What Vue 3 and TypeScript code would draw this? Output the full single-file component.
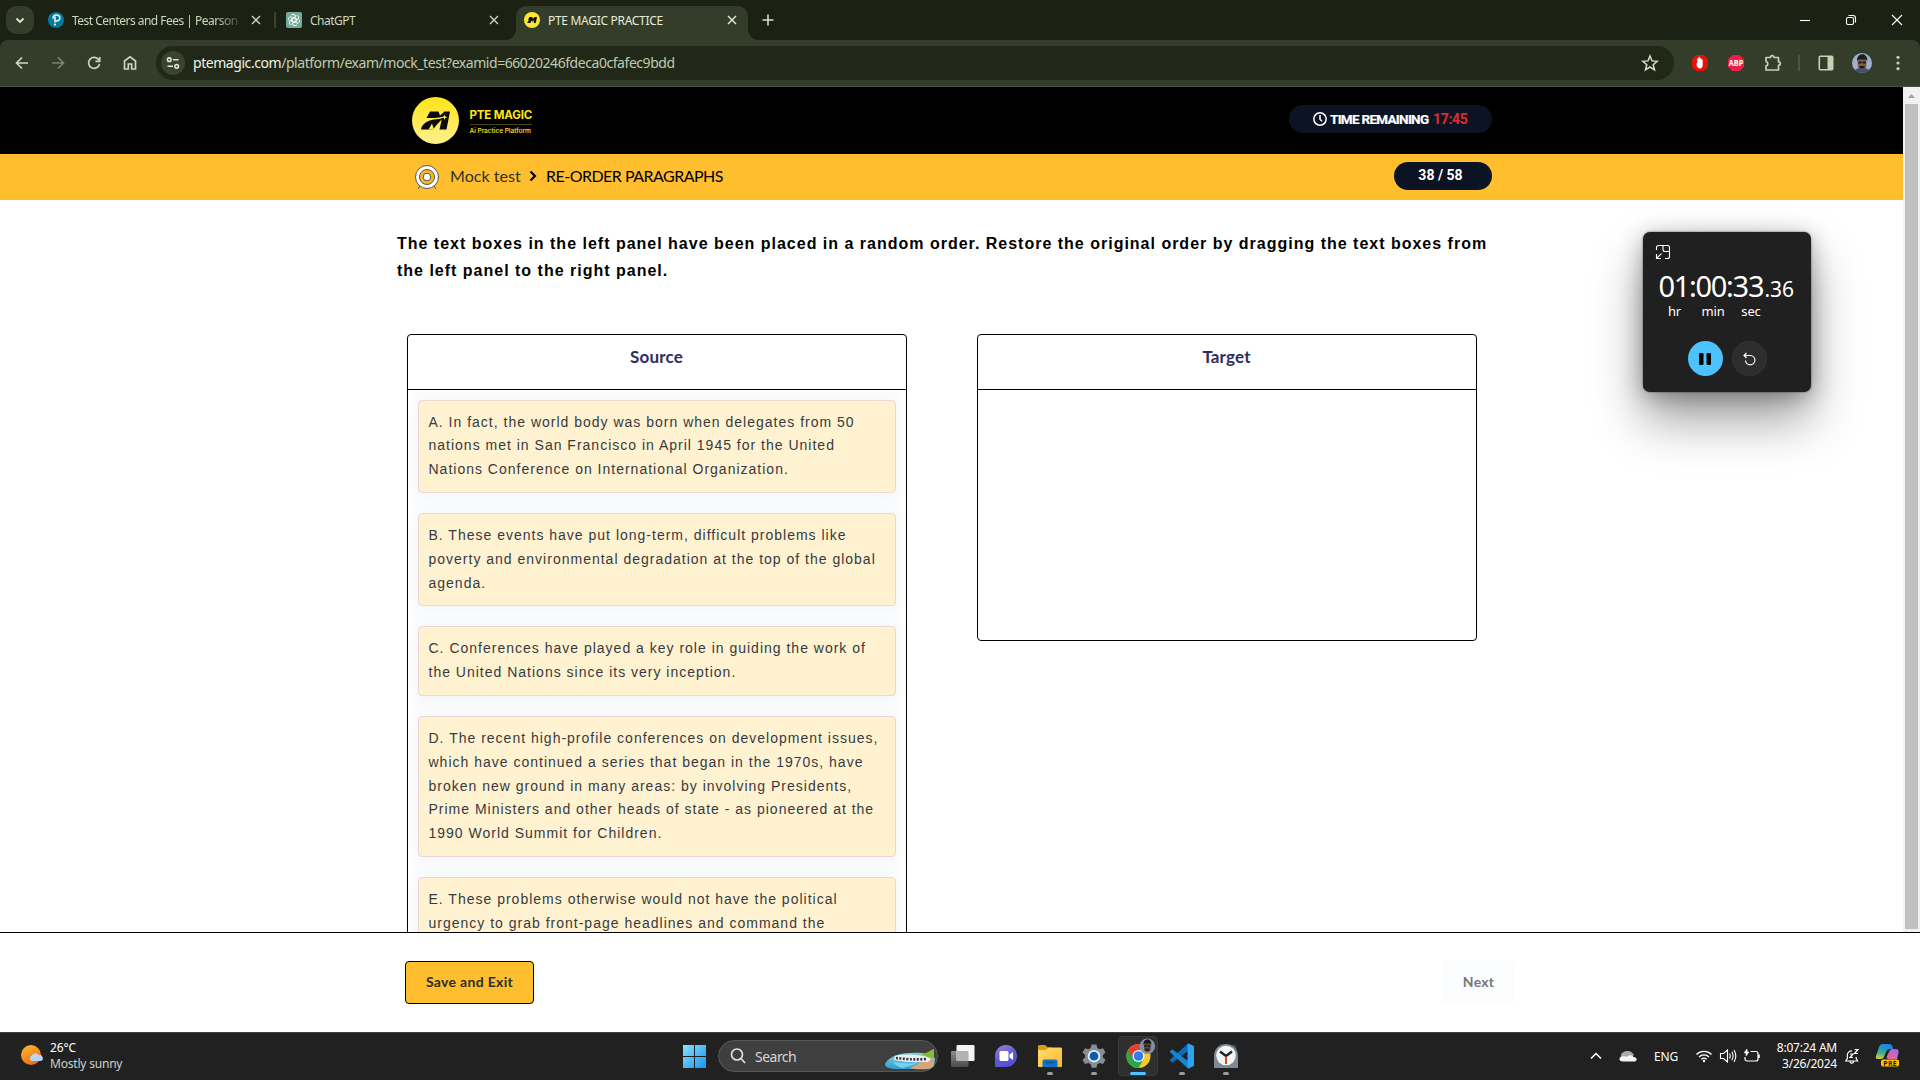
<script setup lang="ts">
interface Item { id: string; text: string }

const items: Item[] = [
  { id: 'A', text: 'In fact, the world body was born when delegates from 50 nations met in San Francisco in April 1945 for the United Nations Conference on International Organization.' },
  { id: 'B', text: 'These events have put long-term, difficult problems like poverty and environmental degradation at the top of the global agenda.' },
  { id: 'C', text: 'Conferences have played a key role in guiding the work of the United Nations since its very inception.' },
  { id: 'D', text: 'The recent high-profile conferences on development issues, which have continued a series that began in the 1970s, have broken new ground in many areas: by involving Presidents, Prime Ministers and other heads of state - as pioneered at the 1990 World Summit for Children.' },
  { id: 'E', text: 'These problems otherwise would not have the political urgency to grab front-page headlines and command the' },
]
</script>

<template>
  <div class="screen">
    <!-- Tab strip -->
    <div class="tabs">
      <div class="tab-search">
        <svg width="28" height="28" viewBox="0 0 28 28"><path d="M10.500 12.500l3.500 3.500 3.500-3.500" fill="none" stroke="#dfe8d2" stroke-width="1.800" /></svg>
      </div>
      <div class="tab t1">
        <svg class="fav" width="16" height="16" viewBox="0 0 16 16"><circle cx="8" cy="8" r="8" fill="#047a9c" /><path d="M5.200 6.600C4.600 4.400 6.400 3 8.400 3c2 0 3.400 1.200 3.400 3S10.400 9.200 8 9M7 4.500V10.500" fill="none" stroke="#fff" stroke-width="1.500" /><circle cx="7" cy="12.500" r="1.100" fill="#fff" /></svg>
        <span class="title fade">Test Centers and Fees | Pearson</span>
        <svg class="x" width="16" height="16" viewBox="0 0 16 16"><path d="M4 4l8 8M12 4l-8 8" /></svg>
      </div>
      <i class="tab-div"></i>
      <div class="tab t2">
        <svg class="fav" width="16" height="16" viewBox="0 0 16 16"><rect width="16" height="16" rx="2" fill="#74aa9c" /><g fill="none" stroke="#fff" stroke-width="0.9"><path v-for="n in 6" :key="n" d="M8 5.600L10.100 6.800V10.900a2.300 2.300 0 0 0 3.300-2.900" :transform="`rotate(${n * 60} 8 8)`" /></g></svg>
        <span class="title gpt">ChatGPT</span>
        <svg class="x" width="16" height="16" viewBox="0 0 16 16"><path d="M4 4l8 8M12 4l-8 8" /></svg>
      </div>
      <div class="tab t3">
        <svg class="fav" width="16" height="16" viewBox="0 0 16 16"><circle cx="8" cy="8" r="8" fill="#ffe833" /><path d="M5.500 5h3l.3 2L10.500 5H13l-1.200 6H9.600l.6-3-1.600 1.800-.8-1.500L6.400 11H3l2-3H4z" fill="#111" /></svg>
        <span class="title pte">PTE MAGIC PRACTICE</span>
        <svg class="x" width="16" height="16" viewBox="0 0 16 16"><path d="M4 4l8 8M12 4l-8 8" /></svg>
      </div>
      <svg class="plus" width="16" height="16" viewBox="0 0 16 16"><path d="M8 2.500v11M2.500 8h11" stroke="#d3dfc4" stroke-width="1.600" /></svg>
      <div class="win">
        <svg width="46" height="40" viewBox="0 0 46 40"><path d="M18 20.500h10" /></svg>
        <svg width="46" height="40" viewBox="0 0 46 40"><rect x="18.500" y="17.500" width="7" height="7" rx="1.500" /><path d="M20.500 15.500H25a2.500 2.500 0 0 1 2.500 2.500v4.500" /></svg>
        <svg width="46" height="40" viewBox="0 0 46 40"><path d="M18 15l10 10M28 15L18 25" /></svg>
      </div>
    </div>

    <!-- Toolbar -->
    <div class="toolbar">
      <div class="nav">
        <svg width="36" height="46" viewBox="0 0 36 46"><path d="M24 23H13M18 17.500L12.500 23l5.500 5.500" /></svg>
        <svg class="dim" width="36" height="46" viewBox="0 0 36 46"><path d="M12 23h11M18 17.500l5.500 5.500-5.500 5.500" /></svg>
        <svg width="36" height="46" viewBox="0 0 36 46"><path d="M22.800 20A5.500 5.500 0 1 0 23.500 24M23.700 17v4.300h-4.300" /></svg>
        <svg width="36" height="46" viewBox="0 0 36 46"><path d="M12.500 29V21L18 16.800 23.500 21v8h-3.800v-5h-3.400v5z" /></svg>
      </div>
      <div class="omnibox">
        <div class="tune">
          <svg width="24" height="24" viewBox="0 0 24 24" fill="none" stroke="#dfe8d2" stroke-width="1.600"><circle cx="8.300" cy="8.700" r="1.800" /><path d="M12 8.700h5.500M6.500 15.300H12" /><circle cx="15.700" cy="15.300" r="1.800" /></svg>
        </div>
        <span class="url"><b>ptemagic.com</b>/platform/exam/mock_test?examid=66020246fdeca0cfafec9bdd</span>
        <svg class="star" width="18" height="18" viewBox="0 0 18 18"><path d="M9 2l2 4.900 5.200.4-4 3.400 1.300 5.100L9 13l-4.500 2.800 1.300-5.100-4-3.400L7 6.900z" fill="none" stroke="#d3dfc4" stroke-width="1.500" /></svg>
      </div>
      <div class="exts">
        <svg class="e1" width="18" height="18" viewBox="0 0 18 18"><path d="M5.300 1h7.400L17 5.300v7.400L12.700 17H5.300L1 12.700V5.300z" fill="#e6100c" /><path d="M5.200 9l1 .8V4.800c0-.9 1.300-.9 1.300 0V3.600c0-1 1.400-1 1.400 0v1c0-.9 1.400-.9 1.400 0v1.200c0-.8 1.400-.8 1.400 0v5.400c0 1.800-1 3.200-3 3.200S6 13 5.200 9z" fill="#fff" /></svg>
        <svg class="e2" width="18" height="18" viewBox="0 0 18 18"><path d="M5.300 1h7.400L17 5.300v7.400L12.700 17H5.300L1 12.700V5.300z" fill="#ed1e45" /><text x="9" y="12" text-anchor="middle" textLength="14.500" lengthAdjust="spacingAndGlyphs" font-size="8.200" font-weight="700" fill="#fff" font-family="Open Sans, sans-serif">ABP</text></svg>
        <svg class="e3" width="20" height="20" viewBox="0 0 20 20"><path d="M3 4.500h4.500a1.800 1.800 0 0 1 3.600 0H15.500V8.800a1.800 1.800 0 0 1 0 3.600V17H3v-4a2.300 2.300 0 0 0 0-4.500z" fill="none" stroke="#c3d2b2" stroke-width="1.700" stroke-linejoin="round" /></svg>
        <i class="sep"></i>
        <svg class="e4" width="16" height="16" viewBox="0 0 16 16"><rect x="1.300" y="1.300" width="13.400" height="13.400" rx="1" fill="none" stroke="#c3d2b2" stroke-width="1.600" /><path d="M9.500 1h5v14h-5z" fill="#c3d2b2" /></svg>
        <svg class="e5" width="20" height="20" viewBox="0 0 20 20"><defs><clipPath id="av"><circle cx="10" cy="10" r="10" /></clipPath></defs><g clip-path="url(#av)"><rect width="20" height="20" fill="#9db0cc" /><path d="M1 20c1-4 5-5 9-5s8 1 9 5z" fill="#3b5273" /><rect x="5.800" y="4" width="8.600" height="12.500" rx="4" fill="#7d5d48" /><path d="M5 8c-.5-9 11-9 10.300 0l-1.300-1.600H6.600z" fill="#1d1c20" /><path d="M6.200 8.500h3.300v2H6.200zM10.600 8.500h3.300v2h-3.300zM7.500 13h5v2.500h-5z" fill="#211b1b" /></g></svg>
        <svg class="e6" width="6" height="18" viewBox="0 0 6 18" fill="#c3d2b2"><circle cx="3" cy="3.300" r="1.600" /><circle cx="3" cy="9" r="1.600" /><circle cx="3" cy="14.700" r="1.600" /></svg>
      </div>
    </div>

    <!-- Web page -->
    <div class="viewport">
      <div class="page">
        <header class="brand-bar">
          <svg class="logo" width="48" height="48" viewBox="0 0 48 48">
            <defs><linearGradient id="lg" x1="0" y1="0" x2="0" y2="1"><stop offset="0" stop-color="#ffe414" /><stop offset="1" stop-color="#fff192" /></linearGradient></defs>
            <circle cx="24.500" cy="23.500" r="23.500" fill="url(#lg)" />
            <path d="M19 14.500h8.500l1.500 4 4.500-4H39l-3.500 18h-7l2.200-10-5.200 5.500-3.500 4.500h-12c.5-5 6-9 13-10l6.500-.8 6.500-2.700-8 1.500c-6 .8-10.500.3-12.500.5z" fill="#0b0b0b" />
            <path d="M33.500 17.500l.7 2 2 .7-2 .7-.7 2-.7-2-2-.7 2-.7z" fill="#ffe93d" />
            <path d="M17.500 32.500l3.500-6 2 6z" fill="#ffed60" />
          </svg>
          <div class="brand">
            <strong>PTE MAGIC</strong>
            <span>Ai Practice Platform</span>
          </div>
          <div class="pill time">
            <svg width="16" height="16" viewBox="0 0 16 16" fill="none" stroke="#fff" stroke-width="1.500"><circle cx="8" cy="8" r="6.200" /><path d="M8 4v4.200l2 2" /></svg>
            <span class="tr">TIME REMAINING</span><span class="left">17:45</span>
          </div>
        </header>
        <div class="crumbs">
          <svg class="target-ico" width="26" height="26" viewBox="0 0 26 26"><path d="M6 22l-2 3M20 22l2 3" stroke="#555" /><circle cx="13" cy="13" r="11.500" fill="#fff" stroke="#57534d" /><circle cx="13" cy="13" r="7.500" fill="#f5b921" stroke="#57534d" /><circle cx="13" cy="13" r="3.800" fill="#fff" stroke="#57534d" /></svg>
          <span class="mock">Mock test</span>
          <svg class="chev" width="8" height="12" viewBox="0 0 8 12"><path d="M1.500 1.500L6 6l-4.500 4.500" fill="none" stroke="#000" stroke-width="2.200" /></svg>
          <span class="crumb">RE-ORDER PARAGRAPHS</span>
          <div class="pill count"><span>38 / 58</span></div>
        </div>
        <main>
          <p class="intro">The text boxes in the left panel have been placed in a random order. Restore the original order by dragging the text boxes from<br>the left panel to the right panel.</p>
          <div class="panels">
            <section class="panel source">
              <h2><span>Source</span></h2>
              <div class="list">
                <div v-for="i in items" :key="i.id" class="card">{{ i.id }}. {{ i.text }}</div>
              </div>
            </section>
            <section class="panel dest"><h2><span>Target</span></h2></section>
          </div>
        </main>
      </div>
      <div class="scroll">
        <svg width="17" height="17" viewBox="0 0 17 17"><path d="M5 11l3.500-4 3.500 4z" fill="#a3a3a3" /></svg>
        <div class="thumb"></div>
      </div>
    </div>
    <footer>
      <button class="save"><span>Save and Exit</span></button>
      <button class="next" disabled><span>Next</span></button>
    </footer>

    <!-- Taskbar -->
    <div class="taskbar">
      <div class="weather">
        <svg width="24" height="24" viewBox="0 0 24 24"><defs><linearGradient id="sun" x1="0" y1="0" x2="0.500" y2="1"><stop offset="0" stop-color="#fbbb2c" /><stop offset="1" stop-color="#f0701a" /></linearGradient></defs><circle cx="11" cy="11" r="10" fill="url(#sun)" /><path d="M11.500 17a3 3 0 0 1 .3-5.500 4 4 0 0 1 7-.2 3 3 0 0 1 2 5.700z" fill="#bcd2f7" /></svg>
        <div class="wtext"><span class="deg">26°C</span><span class="mostly">Mostly sunny</span></div>
      </div>
      <div class="apps">
        <svg class="winlogo" width="24" height="24" viewBox="0 0 24 24"><defs><linearGradient id="wl" x1="0" y1="0" x2="1" y2="1"><stop offset="0" stop-color="#8be0fc" /><stop offset="1" stop-color="#1595f2" /></linearGradient></defs><path d="M0 1h11v11H0zM12 1h11v11H12zM0 13h11v11H0zM12 13h11v11H12z" fill="url(#wl)" /></svg>
        <div class="search">
          <svg class="mag" width="18" height="18" viewBox="0 0 18 18" fill="none" stroke="#e4e4e4" stroke-width="1.600"><circle cx="8" cy="7.500" r="5.500" /><path d="M12 11.500l4 4.500" /></svg>
          <span>Search</span>
          <svg class="beach" width="50" height="24" viewBox="0 0 50 24"><defs><linearGradient id="sea" x1="0" y1="0" x2="0" y2="1"><stop offset="0" stop-color="#8fcfcf" /><stop offset="1" stop-color="#2c9ed6" /></linearGradient></defs><path d="M0 17C5 7 20 5 38 6l12 5c0 5-1 9-5 11H8C3 21 0 20 0 17z" fill="url(#sea)" /><path d="M36 7c8-1 9-4 13-5v10c-5 0-9-1-13-5z" fill="#83bd34" /><path d="M38 9l11 2v8l-5 3c-6 0-12 1-19-1 4-3 15-5 13-12z" fill="#d4a77a" /><path d="M10 9c9-2 19-1 30 0l6 3-3 3c-11 0-21 1-34-2z" fill="#eceff0" /><path d="M11 11c9 1 19 2 30 1" fill="none" stroke="#303a46" stroke-width="2.600" stroke-dasharray="2 1.500" /><path d="M8 15c9 1 15 2 24 1-5 3-9 3-14 5-5-1-8-3-10-6z" fill="#7dd0ec" /></svg>
        </div>
        <div class="app a1"><svg width="26" height="28" viewBox="0 0 26 28"><defs><linearGradient id="tv" x1="0" y1="0" x2="0" y2="1"><stop offset="0" stop-color="#8d8d8d" /><stop offset="1" stop-color="#4a4a4a" /></linearGradient></defs><rect x="1" y="9" width="17.500" height="16" rx="1" fill="url(#tv)" /><rect x="6.500" y="3" width="18" height="16" rx="1" fill="#f5f5f5" /><path d="M6.500 9h11a1 1 0 0 1 1 1v9h-11a1 1 0 0 1-1-1z" fill="#b3b3b3" /></svg></div>
        <div class="app a2"><svg width="26" height="28" viewBox="0 0 26 28"><defs><linearGradient id="ch" x1="0" y1="0" x2="0.500" y2="1"><stop offset="0" stop-color="#a488cf" /><stop offset=".6" stop-color="#5f59d2" /><stop offset="1" stop-color="#5450d2" /></linearGradient></defs><path d="M2 25V14a11 11 0 1 1 11 11z" fill="url(#ch)" /><rect x="6.500" y="9" width="9" height="10" rx="1.500" fill="#fff" /><path d="M16.500 12.500l3.500-2.500v8l-3.500-2.500z" fill="#fff" /></svg></div>
        <div class="app a3"><svg width="26" height="28" viewBox="0 0 26 28"><defs><linearGradient id="fo" x1="0" y1="0" x2="1" y2="1"><stop offset="0" stop-color="#ffde71" /><stop offset="1" stop-color="#fbb928" /></linearGradient></defs><path d="M1 4.500Q1 3 2.500 3H8l3 2.500h4v5H1z" fill="#dd9c18" /><path d="M1 8h8l2.500-2.500H24q1 0 1 1v17.500q0 1-1 1H2q-1 0-1-1z" fill="url(#fo)" /><path d="M5.500 25v-6q0-1.500 1.500-1.500h12q1.500 0 1.500 1.500v6z" fill="#1173c7" /><path d="M8.500 20.500h9" stroke="#0b4f91" stroke-width="1.500" /></svg><i></i></div>
        <div class="app a4"><svg width="26" height="28" viewBox="0 0 26 28"><path d="M10.500 2.500h5l.8 3.500 2.300 1.300 3.400-1.100 2.500 4.300-2.600 2.400v2.500l2.600 2.400-2.500 4.300-3.400-1.100-2.300 1.300-.8 3.500h-5l-.8-3.500-2.300-1.300-3.400 1.100-2.500-4.300 2.600-2.400v-2.500l-2.600-2.400L4 6.200l3.400 1.100L9.700 6z" fill="#848e98" /><circle cx="13" cy="14.200" r="6.200" fill="#e9f1f8" /><circle cx="13" cy="14.200" r="4.400" fill="#0d5dac" /></svg><i></i></div>
        <div class="app a5 active"><svg width="40" height="36" viewBox="0 0 40 36"><circle cx="19.500" cy="19" r="12" fill="#f7c928" /><path d="M9.100 13A12 12 0 0 0 19.500 31l5.200-9-5.200-3z" fill="#2ca64b" /><path d="M9.100 13L14.300 22 19.500 19V13H29.900A12 12 0 0 0 9.100 13z" fill="#e63e30" /><circle cx="19.500" cy="19" r="6" fill="#fff" /><circle cx="19.500" cy="19" r="4.800" fill="#2f7de9" /><g transform="translate(20.500 1.500) scale(.78)"><circle cx="10" cy="10" r="10" fill="#8091a7" /><rect x="5.800" y="4" width="8.600" height="13" rx="4" fill="#5b4437" /><path d="M5 8c-.5-9 11-9 10.300 0l-1.300-1.600H6.600z" fill="#17171a" /><path d="M6 8.500h3.400v2H6zM10.600 8.500H14v2h-3.400zM7.500 13h5v2.500h-5z" fill="#17171a" /></g></svg><i></i></div>
        <div class="app a6"><svg width="26" height="28" viewBox="0 0 26 28"><path d="M19 1.500V9L4 20.300q-.8.500-1.500 0L1.300 19q-.6-.8 0-1.500z" fill="#0b6fb5" /><path d="M19 26.500V19L4 7.700q-.8-.5-1.500 0L1.300 9q-.6.800 0 1.500z" fill="#1584d0" /><path d="M18.500 2L19.500 1.500 24.300 3.700q.7.400.7 1.200v18.200q0 .8-.7 1.200L19.500 26.500 18.500 26z" fill="#2ba4f0" /></svg><i></i></div>
        <div class="app a7"><svg width="26" height="28" viewBox="0 0 26 28"><circle cx="21" cy="5" r="2.500" fill="#3d4247" /><path d="M1 14C1-2 25-2 25 14v11.500q0 .5-.5.500h-23Q1 26 1 25.500z" fill="#7d8993" /><circle cx="13" cy="13.500" r="9.800" fill="#f2f4f5" /><path d="M7 9.500l6 4.500 6-4.500" fill="none" stroke="#222" stroke-width="2.400" /><path d="M13 14.500v7.500" stroke="#d64b18" stroke-width="2" /></svg><i></i></div>
      </div>
      <div class="tray">
        <svg class="up" width="12" height="8" viewBox="0 0 12 8"><path d="M1 6.500l5-5 5 5" fill="none" stroke="#fff" stroke-width="1.500" /></svg>
        <svg class="cloud" width="18" height="12" viewBox="0 0 18 12"><path d="M2 8C1 3 5 1 8 1c3-.5 5 1 7 4l-4 3z" fill="#a9a9a9" /><path d="M4 11.500c-5 0-4.500-5 0-5.200 2-.2 2.500 0 4 .5 2-2.500 6-2 6.500.3 4 0 4 4.400 1 4.400z" fill="#f5f5f5" /></svg>
        <span class="eng">ENG</span>
        <svg class="wifi" width="18" height="14" viewBox="0 0 18 14" fill="none" stroke="#fff" stroke-width="1.200"><path d="M1.500 5.500a10.500 10.500 0 0 1 15 0M4 8a7 7 0 0 1 10 0M6.300 10.300a3.800 3.800 0 0 1 5.400 0" /><circle cx="9" cy="12" r="1.200" fill="#fff" stroke="none" /></svg>
        <svg class="vol" width="18" height="16" viewBox="0 0 18 16" fill="none" stroke="#fff" stroke-width="1.100"><path d="M1.500 5.500h3L8.500 2v12l-4-3.500h-3zM10.500 5.500q1.500 2.500 0 5M12.800 3.800q2.600 4.200 0 8.400M15 2q3.600 6 0 12" /></svg>
        <svg class="bat" width="18" height="16" viewBox="0 0 18 16" fill="none" stroke="#fff" stroke-width="1.200"><path d="M7.500 3.500h5.500a2 2 0 0 1 2 2v5.500a2 2 0 0 1-2 2H4a2 2 0 0 1-2-2V9M16.200 6.500v3.500" /><path d="M4 1L1 5h2v3l3-4H4.300z" fill="#fff" stroke-width=".5" /></svg>
        <div class="clock"><span class="ct">8:07:24 AM</span><span class="cd">3/26/2024</span></div>
        <svg class="bell" width="16" height="17" viewBox="0 0 16 17" fill="none" stroke="#fff" stroke-width="1.200"><path d="M8 2.800A4.600 4.600 0 0 0 3.300 7v3.500L1.800 13h11.800l-1.400-2.500V9M6 13.500c0 2.200 3.500 2.200 3.500 0M6 6h3L6 9.500h3M10.500 1.500h3.500l-3.500 4H14" /></svg>
        <svg class="copilot" width="26" height="26" viewBox="0 0 26 26"><defs><linearGradient id="c1" x1="0.300" y1="0" x2="0" y2="1"><stop offset="0" stop-color="#1789e5" /><stop offset=".5" stop-color="#35a998" /><stop offset="1" stop-color="#f2cf38" /></linearGradient><linearGradient id="c2" x1="0.700" y1="0" x2="0" y2="1"><stop offset="0" stop-color="#ac64e9" /><stop offset="1" stop-color="#f0697f" /></linearGradient></defs><path d="M4 4q1-3 4-3h6q3 0 3.500 3l.5 2h-4q-2 0-3 3l-2 5q-.8 2-3 2H3q-3 0-2-3z" fill="url(#c1)" /><path d="M14 9q1-3 4-3h3q3 0 2.500 4L22 16h-8q-3 0-2-3z" fill="url(#c2)" /><rect x="6" y="16.500" width="18" height="7" rx="2" fill="#ffc400" /><text x="15" y="22.600" text-anchor="middle" font-size="7" font-weight="700" fill="#221b00" font-family="Open Sans, sans-serif" textLength="13.500">PRE</text></svg>
      </div>
    </div>

    <!-- Always-on-top stopwatch window -->
    <div class="stopwatch">
      <svg class="pip" width="16" height="16" viewBox="0 0 16 16" fill="none" stroke="#fff" stroke-width="1.100"><path d="M1.500 6V3.500a2 2 0 0 1 2-2h9a2 2 0 0 1 2 2v9a2 2 0 0 1-2 2H10M8 1.500v4a2 2 0 0 0 2 2h4.500M6.500 9.500L1.800 14.200M1.500 10v4.500H6" /></svg>
      <div class="digits"><span class="big">01:00:33</span><span class="small">.36</span></div>
      <div class="units"><span>hr</span><span>min</span><span>sec</span></div>
      <div class="ctrls">
        <div class="pause"><svg width="12" height="12" viewBox="0 0 12 12"><rect x="0" y="0" width="4.500" height="12" rx="1.200" /><rect x="7.500" y="0" width="4.500" height="12" rx="1.200" /></svg></div>
        <div class="reset"><svg width="14" height="14" viewBox="0 0 14 14" fill="none" stroke="#fff" stroke-width="1.200"><path d="M1 3.500h7a4.700 4.700 0 1 1-5.500 5M3.500 1L1 3.500 3.500 6" /></svg></div>
      </div>
    </div>
  </div>
</template>

<style>
html, body { margin: 0; background: #fff; overflow: hidden; }
</style>

<style scoped>
* { box-sizing: border-box; }
svg { display: block; flex: none; }
span { white-space: nowrap; }
.screen { width: 1920px; height: 1080px; overflow: hidden; position: relative; display: flex; flex-direction: column; font-family: "Noto Sans", sans-serif; background: #fff; }
/* browser chrome */
.tabs { height: 40px; flex: none; background: #1b2113; display: flex; align-items: center; font-size: 12px; color: #cbd9bb; z-index: 1; }
.tab-search { width: 28px; height: 28px; margin-left: 6px; border-radius: 10px; background: #333d2a; }
.tab { display: flex; align-items: center; height: 34px; align-self: flex-end; padding-bottom: 6px; }
.title { margin-left: 8px; line-height: 20px; padding-top: 1px; flex: 1; }
.x { stroke: #cbd9bb; stroke-width: 1.400; fill: none; }
.t1 { width: 216px; margin-left: 14px; }
.fade { letter-spacing: -0.520px; margin-right: 8px; -webkit-mask-image: linear-gradient(90deg, #000 86%, rgba(0, 0, 0, .15)); mask-image: linear-gradient(90deg, #000 86%, rgba(0, 0, 0, .15)); }
.tab-div { width: 2px; height: 16px; background: #3b4431; margin: 0 10px 0 10px; }
.t2 { width: 216px; }
.gpt { letter-spacing: -0.500px; }
.t3 { width: 232px; margin-left: 14px; padding: 0 8px 6px; background: #333d2a; border-radius: 10px 10px 0 0; color: #e6eedb; position: relative; }
.t3::before, .t3::after { content: ""; position: absolute; bottom: 0; width: 10px; height: 10px; }
.t3::before { left: -10px; background: radial-gradient(circle at 0 0, transparent 9.500px, #333d2a 10px); }
.t3::after { right: -10px; background: radial-gradient(circle at 100% 0, transparent 9.500px, #333d2a 10px); }
.t3 .x { stroke: #e6eedb; }
.pte { letter-spacing: -0.300px; }
.plus { margin-left: 12px; }
.win { margin-left: auto; display: flex; fill: none; stroke: #fff; stroke-width: 1.100; }
.toolbar { height: 47px; flex: none; background: #333d2a; border-bottom: 1px solid #4b5443; display: flex; align-items: center; border-radius: 8px 8px 0 0; box-shadow: 0 -10px 0 #1b2113; z-index: 0; }
.nav { display: flex; margin-left: 4px; fill: none; stroke: #c9d7b9; stroke-width: 1.700; }
.dim { stroke: #7a8470; }
.omnibox { margin-left: 8px; width: 1518px; height: 34px; border-radius: 17px; background: #222817; display: flex; align-items: center; }
.tune { width: 24px; height: 24px; margin-left: 5px; border-radius: 50%; background: #39432f; }
.url { margin-left: 8px; font-size: 14px; letter-spacing: -0.445px; color: #bfcab1; line-height: 20px; }
.url b { font-weight: 400; color: #eef4e6; }
.star { margin: 0 15px 0 auto; }
.exts { display: flex; align-items: center; }
.e1 { margin-left: 17px; } .e2 { margin-left: 18px; } .e3 { margin-left: 18px; }
.sep { width: 2px; height: 16px; background: #4d5742; margin-left: 15px; }
.e4 { margin-left: 18px; } .e5 { margin-left: 18px; } .e6 { margin-left: 23px; }
/* page */
.viewport { height: 845px; flex: none; display: flex; overflow: hidden; }
.page { width: 1903px; }
.brand-bar { height: 67px; background: #000; display: flex; align-items: center; padding: 0 411px; }
.brand { margin: 3px 0 0 10.500px; width: 70px; color: #ffe614; font-family: Inter, sans-serif; display: flex; flex-direction: column; align-items: flex-start; }
.brand strong { font-size: 11.500px; line-height: 15px; height: 17px; width: 62px; letter-spacing: -0.150px; white-space: nowrap; border-bottom: 1px solid #4a430b; }
.brand span { font-size: 6.600px; line-height: 12px; font-weight: 500; letter-spacing: -0.050px; }
.pill { height: 28px; border-radius: 14px; background: #0c1424; color: #fff; font: 700 14px/26px Roboto, sans-serif; margin-left: auto; }
.time { width: 203px; display: flex; align-items: center; padding-left: 23px; margin-top: -3px; flex: none; }
.tr { width: 98px; margin-left: 2px; font-size: 13.500px; letter-spacing: -0.720px; -webkit-text-stroke: .2px #fff; }
.left { color: #e02b31; margin-left: 5px; letter-spacing: -0.300px; }
.crumbs { height: 46px; background: #ffbe2e; display: flex; align-items: center; padding: 0 411px 0 414px; font: 16px/24px Lato, sans-serif; }
.mock { width: 70px; margin: -2px 0 0 10px; color: #30302c; letter-spacing: .050px; }
.chev { margin: -2px 0 0 9px; }
.crumb { margin: -2px 0 0 9px; color: #000; letter-spacing: -0.520px; }
.count { width: 98px; text-align: center; padding-right: 5px; margin-top: -2px; }
main { padding: 30px 0 0 397px; }
.intro { margin: 0; font: 700 16px/27px "Liberation Sans", Arial, sans-serif; letter-spacing: .995px; white-space: nowrap; color: #000; }
.panels { display: flex; align-items: flex-start; gap: 70px; margin: 50px 0 0 10px; }
.panel { width: 500px; border: 1px solid #000; border-radius: 4px; background: #fff; flex: none; }
.panel h2 { margin: 0; height: 55px; border-bottom: 1px solid #000; text-align: center; font: 700 17px/26px Lato, sans-serif; color: #2e2e5c; padding: 9px 1px 0 0; letter-spacing: .150px; }
.dest { height: 307px; }
.list { padding: 9.600px 10px 10px; display: flex; flex-direction: column; gap: 20px; overflow: hidden; background: linear-gradient(90deg, #fff, #fbfcfd 10px, #fbfcfd calc(100% - 10px), #fff); }
.card { border: 1px solid #ebd8d6; border-radius: 4px; background: #fff2d1; padding: 10px 10px 10px 9.500px; font: 14px/23.800px "Liberation Sans", Arial, sans-serif; letter-spacing: 1px; color: #373a40; box-shadow: 0 2px 16px rgba(127, 137, 170, .08); }
.scroll { width: 17px; background: #f1f1f1; }
.thumb { width: 13px; height: 825px; background: #c1c1c1; margin: 0 2px; }
footer { height: 100px; flex: none; border-top: 1px solid #000; background: #fff; display: flex; justify-content: space-between; align-items: flex-start; padding: 28px 405px 0; }
footer button { height: 43px; padding: 0 0 2px; border-radius: 4px; font: 700 14px/20px Lato, sans-serif; }
.save { width: 129px; border: 1px solid #000; background: #ffbe2e; color: #2d2d2b; letter-spacing: .320px; }
.next { width: 73px; border: 0; background: #fbfcfe; color: #777; letter-spacing: .200px; }
/* taskbar */
.taskbar { height: 48px; flex: none; background: #212121; border-top: 1px solid #414141; display: flex; align-items: flex-start; color: #fff; font-size: 12px; }
.weather { display: flex; align-items: center; height: 46px; width: 683px; padding-left: 20px; }
.wtext { margin: -1px 0 0 6px; display: flex; flex-direction: column; line-height: 16px; }
.deg { letter-spacing: -0.100px; } .mostly { color: #cfcfcf; letter-spacing: -0.200px; }
.apps { display: flex; align-items: center; height: 46px; }
.search { margin-left: 11px; width: 220px; height: 32px; border-radius: 16px; background: #3f3f3f; border: 1px solid #565656; display: flex; align-items: center; font-size: 14px; color: #d6d6d6; }
.search span { margin: 0 0 0 8px; letter-spacing: -0.520px; }
.mag { margin-left: 10px; } .beach { margin: 6px 2px 0 auto; }
.app { width: 40px; height: 40px; margin-left: 4px; display: flex; justify-content: center; padding-top: 6px; position: relative; border-radius: 4px; }
.app i { position: absolute; bottom: 1px; left: 17px; width: 6px; height: 3px; border-radius: 2px; background: #9a9a9a; }
.app.a1 { margin-left: 5px; }
.app.a2 { margin-left: 3px; }
.active { background: #2f2f2f; border: 1px solid #393939; padding-top: 0; justify-content: flex-start; }
.app.active i { left: 11px; bottom: 0; width: 16px; background: #4cc2ff; }
.tray { margin-left: auto; height: 46px; display: flex; align-items: center; padding-right: 19px; }
.cloud { margin-left: 17px; }
.eng { width: 24px; margin-left: 17px; letter-spacing: -0.100px; }
.wifi { margin-left: 17px; } .vol { margin-left: 6px; } .bat { margin-left: 6px; }
.clock { width: 66px; margin: -1px 0 0 10px; display: flex; flex-direction: column; align-items: flex-end; line-height: 16px; }
.ct { letter-spacing: -0.220px; } .cd { letter-spacing: -0.220px; }
.bell { margin-left: 7px; } .copilot { margin-left: 15px; }
/* floating stopwatch */
.stopwatch { position: absolute; left: 1643px; top: 232px; width: 168px; height: 160px; border-radius: 7px; background: #202020; color: #fff; box-shadow: 0 28px 50px rgba(0, 0, 0, .38), 0 4px 22px rgba(0, 0, 0, .3), 0 0 2px rgba(0, 0, 0, .6); display: flex; flex-direction: column; z-index: 2; }
.pip { margin: 12px 0 0 12px; }
.digits { display: flex; align-items: baseline; height: 32px; margin: 10px 0 0 15.500px; line-height: 32px; }
.big { font-size: 29px; width: 106px; letter-spacing: -1.300px; }
.small { font-size: 21px; letter-spacing: -0.100px; }
.units { display: flex; font-size: 13px; line-height: 16px; margin-top: 1px; height: 16px; }
.units span { width: 40px; text-align: center; letter-spacing: -0.100px; }
.units span:first-child { margin-left: 12px; width: 39px; }
.units span:nth-child(2) { width: 38px; }
.units span:nth-child(3) { width: 38px; }
.ctrls { display: flex; gap: 9px; margin: 22px 0 0 45px; }
.pause, .reset { width: 35px; height: 35px; border-radius: 50%; background: #4cc2ff; display: flex; align-items: center; justify-content: center; }
.pause { padding-right: 1px; }
.reset { background: #2d2d2d; border: 1px solid #353535; }
</style>
